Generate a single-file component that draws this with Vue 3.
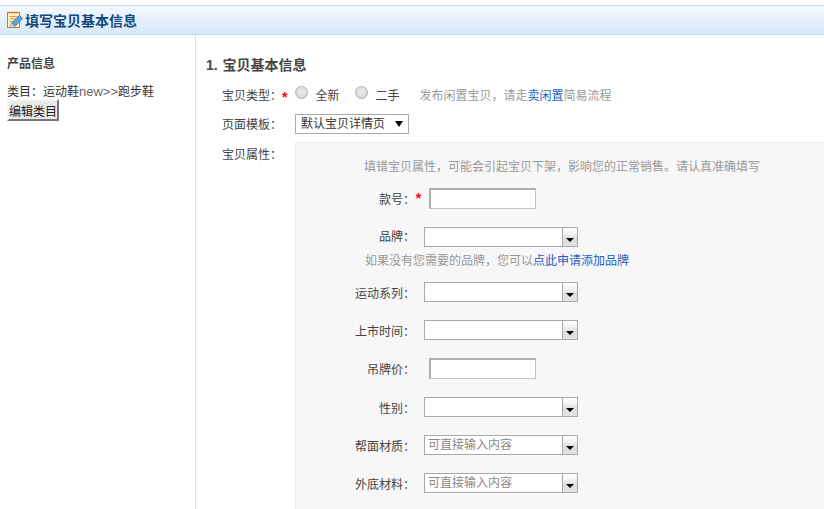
<template>
  <div class="page">
    <div class="title-bar">
      <svg class="title-icon" width="18" height="18" viewBox="0 0 18 18">
        <rect x="0.500" y="1.500" width="12" height="15" fill="#fff3c4" stroke="#e0701f" />
        <path d="M2.500 0.500v2M5 0.500v2M7.500 0.500v2M10 0.500v2" stroke="#e0701f" stroke-width="1" />
        <path d="M2.500 5.500h8M2.500 8h7M2.500 10.500h4" stroke="#d8a040" stroke-width="1" />
        <path d="M3.500 16.500l0.800-4 8.200-8.200 3.200 3.200-8.200 8.200z" fill="#5aa5e0" stroke="#2a6ea6" stroke-width=".8" />
        <path d="M3.500 16.500l0.800-4 3.200 3.200z" fill="#f5d9a5" />
      </svg>
      <span class="title-text">填写宝贝基本信息</span>
    </div>

    <div class="content">
      <aside class="sidebar">
        <h3>产品信息</h3>
        <div class="crumb">类目：运动鞋<span class="latin">new&gt;&gt;</span>跑步鞋</div>
        <button class="edit-btn">编辑类目</button>
      </aside>

      <main class="main">
        <h2>1. 宝贝基本信息</h2>

        <div class="row row-type">
          <span class="row-label">宝贝类型：</span>
          <span class="star">*</span>
          <span class="radio"></span>
          <span class="radio-text">全新</span>
          <span class="radio"></span>
          <span class="radio-text">二手</span>
          <span class="tip">发布闲置宝贝，请走<a>卖闲置</a>简易流程</span>
        </div>

        <div class="row row-tpl">
          <span class="row-label">页面模板：</span>
          <div class="select">默认宝贝详情页<i class="select-arrow"></i></div>
        </div>

        <div class="row row-attrs">
          <span class="row-label">宝贝属性：</span>
          <div class="panel">
            <p class="panel-tip">填错宝贝属性，可能会引起宝贝下架，影响您的正常销售。请认真准确填写</p>

            <div v-for="f in fields" :key="f.label" class="field" :class="f.cls">
              <span class="field-label">{{ f.label }}：</span>
              <span v-if="f.required" class="star field-star">*</span>
              <div v-if="f.type === 'input'" class="text-input"></div>
              <div v-else class="combo">
                <span class="combo-value">{{ f.placeholder }}</span>
                <span class="combo-btn"><i></i></span>
              </div>
              <p v-if="f.note" class="field-note">{{ f.note }}<a>点此申请添加品牌</a></p>
            </div>
          </div>
        </div>
      </main>
    </div>
  </div>
</template>

<script setup>
const fields = [
  { label: '款号', type: 'input', required: true, cls: 'f-code' },
  { label: '品牌', type: 'combo', cls: 'f-brand', note: '如果没有您需要的品牌，您可以' },
  { label: '运动系列', type: 'combo', cls: 'f-series' },
  { label: '上市时间', type: 'combo' },
  { label: '吊牌价', type: 'input', cls: 'f-price' },
  { label: '性别', type: 'combo', cls: 'f-gender' },
  { label: '帮面材质', type: 'combo', placeholder: '可直接输入内容' },
  { label: '外底材料', type: 'combo', placeholder: '可直接输入内容' }
]
</script>

<style>
html,
body {
  margin: 0;
  background: #fff;
  overflow: hidden;
}
</style>

<style scoped>
.page {
  width: 824px;
  height: 509px;
  overflow: hidden;
  padding-top: 5px;
  box-sizing: border-box;
  font-family: "Liberation Sans", "Noto Sans CJK SC", sans-serif;
  font-size: 12px;
  color: #444;
  background: #fff;
}

.title-bar {
  height: 30px;
  box-sizing: border-box;
  display: flex;
  align-items: center;
  padding-left: 7px;
  border-top: 1px solid #c5dcf8;
  border-bottom: 1px solid #bcd8fb;
  background: linear-gradient(to bottom, #f3f8fe, #d7e8fc);
}

.title-text {
  font-size: 14px;
  font-weight: bold;
  color: #134a7c;
}

.content {
  display: flex;
  height: 474px;
}

.sidebar {
  flex: none;
  width: 196px;
  box-sizing: border-box;
  padding: 20px 0 0 7px;
  border-right: 1px solid #cfdff2;
}

.sidebar h3 {
  margin: 0;
  font-size: 12px;
  line-height: 18px;
  font-weight: bold;
  color: #444;
}

.crumb {
  height: 16px;
  margin-top: 10px;
  line-height: 18px;
  color: #333;
}

.latin {
  color: #666;
  font-size: 13px;
  line-height: 1;
}

.edit-btn {
  display: block;
  width: 52px;
  height: 22px;
  padding: 0;
  font: inherit;
  color: #222;
  background: #e8e8e8;
  border: 2px solid;
  border-color: #f4f4f4 #777 #777 #f4f4f4;
}

.main {
  flex: 1;
  min-width: 0;
  padding: 20px 0 0 10px;
}

.main h2 {
  margin: 0;
  font-size: 14px;
  line-height: 20px;
  font-weight: bold;
  color: #444;
  word-spacing: 1px;
}

.row {
  display: flex;
  align-items: flex-start;
}

.row-label {
  flex: none;
  width: 60px;
  margin-left: 16px;
  line-height: 20px;
  color: #444;
}

.row-type {
  margin-top: 11px;
  height: 20px;
  line-height: 20px;
}

.star {
  color: #f00;
  font-family: "Liberation Sans", sans-serif;
  font-size: 14px;
  font-weight: bold;
  line-height: 22px;
}

.radio {
  flex: none;
  width: 13px;
  height: 13px;
  margin: 0 0 0 8px;
  box-sizing: border-box;
  border-radius: 50%;
  border: 1px solid #b4b4b4;
  background: radial-gradient(circle at 50% 45%, #eeeeee 0%, #dcdcdc 60%, #c6c6c6 100%);
}

.row-type .radio + .radio-text {
  margin-left: 7px;
}

.radio-text {
  width: 40px;
  color: #444;
}

.row-type .radio-text + .radio {
  margin-left: 0;
}

.tip {
  margin-left: 4px;
  color: #999;
}

a {
  color: #1b5fc4;
  text-decoration: none;
}

.row-tpl {
  margin-top: 8px;
}

.row-tpl .row-label {
  padding-top: 1px;
}

.select {
  position: relative;
  margin-left: 13px;
  width: 114px;
  height: 20px;
  box-sizing: border-box;
  border: 1px solid #a9a9a9;
  padding-left: 5px;
  line-height: 18px;
  color: #333;
  background: #fff;
}

.select-arrow {
  position: absolute;
  right: 5px;
  top: 6px;
  width: 0;
  height: 0;
  border-left: 4px solid transparent;
  border-right: 4px solid transparent;
  border-top: 6px solid #000;
}

.row-attrs {
  margin-top: 7px;
}

.row-attrs .row-label {
  padding-top: 3px;
}

.panel {
  flex: 1;
  min-width: 0;
  margin-left: 13px;
  height: 380px;
  box-sizing: border-box;
  border: 1px solid #eee;
  border-right: 0;
  background: #f7f7f7;
}

.panel-tip {
  margin: 15px 0 0 68px;
  line-height: 18px;
  color: #999;
}

.field {
  display: flex;
  flex-wrap: wrap;
  align-items: center;
  height: 20px;
  margin-top: 18px;
}

.field-label {
  width: 119px;
  text-align: right;
  flex: none;
  color: #444;
}

.f-code {
  margin-top: 11px;
  height: 21px;
}

.f-brand {
  margin-top: 19px;
  height: 40px;
  align-items: flex-start;
  align-content: flex-start;
}

.f-brand .field-label {
  line-height: 20px;
}

.f-series {
  margin-top: 15px;
}

.f-price {
  height: 21px;
}

.f-gender {
  margin-top: 18px;
}

.field-star {
  width: 7px;
  text-align: center;
}

.text-input {
  width: 107px;
  height: 21px;
  margin-left: 14px;
  box-sizing: border-box;
  border-style: solid;
  border-width: 2px 1px 1px 2px;
  border-color: #b0b0b0 #c4c4c4 #c4c4c4 #b0b0b0;
  background: #fff;
}

.f-code .text-input {
  margin-left: 7px;
}

.combo {
  width: 154px;
  height: 20px;
  margin-left: 9px;
  box-sizing: border-box;
  border: 1px solid #a9a9a9;
  background: #fff;
  display: flex;
  justify-content: space-between;
}

.combo-value {
  padding-left: 3px;
  line-height: 18px;
  color: #888;
}

.combo-btn {
  width: 15px;
  flex: none;
  border-left: 1px solid #a9a9a9;
  display: flex;
  align-items: flex-end;
  justify-content: center;
  padding-bottom: 4px;
  box-sizing: border-box;
  background: linear-gradient(to bottom, #fff 0, #f4f4f4 30%, #dedede 60%, #e4e4e4 100%);
}

.combo-btn i {
  width: 0;
  height: 0;
  border-left: 4px solid transparent;
  border-right: 4px solid transparent;
  border-top: 4px solid #000;
}

.field-note {
  width: 100%;
  margin: 8px 0 0 69px;
  line-height: 12px;
  color: #999;
}
</style>
